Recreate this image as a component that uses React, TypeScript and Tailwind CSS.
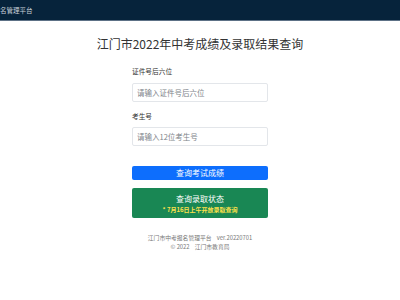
import React from 'react';

const font = { fontFamily: '"Noto Sans CJK SC", "Noto Sans", sans-serif' };

export default function App() {
    return (
        <div className="w-[400px] h-[300px] bg-white overflow-hidden" style={font}>
            {/* top bar, brand text is clipped at the left edge */}
            <div className="h-[21px] bg-[#06233b] border-b-[1.5px] border-[#5d7186] overflow-hidden flex items-center">
                <span className="ml-[-39px] text-[6.5px] leading-none text-[#c9d1d9] whitespace-nowrap">
                    江门市中考报名管理平台
                </span>
            </div>

            <h1 className="mt-[15px] text-center text-[12px] leading-[16px] text-[#333]">
                江门市2022年中考成绩及录取结果查询
            </h1>

            <div className="w-[136px] mx-auto mt-[15px] flex flex-col">
                <label className="text-[6.7px] leading-[8px] text-[#333]">证件号后六位</label>
                <input
                    className="mt-[8px] h-[19px] border border-[#e3e6ea] rounded-[2px] px-[4px] text-[7.5px] placeholder:text-[#7d8389] outline-none"
                    placeholder="请输入证件号后六位"
                />
                <label className="mt-[10px] text-[6.7px] leading-[8px] text-[#333]">考生号</label>
                <input
                    className="mt-[7px] h-[19px] border border-[#e3e6ea] rounded-[2px] px-[4px] text-[7.5px] placeholder:text-[#7d8389] outline-none"
                    placeholder="请输入12位考生号"
                />

                <button className="mt-[20px] h-[14px] rounded-[2px] bg-[#0d6efd] text-white text-[8px] leading-none">
                    查询考试成绩
                </button>
                <button className="mt-[8px] h-[30px] rounded-[2px] bg-[#198754] text-white flex flex-col items-center justify-center">
                    <span className="text-[8px] leading-[10px]">查询录取状态</span>
                    <span className="mt-[2px] text-[6px] leading-[7px] font-bold text-[#ffe14a]">* 7月16日上午开放录取查询</span>
                </button>
            </div>

            <div className="mt-[15px] text-center text-[5.8px] leading-[9px] text-[#777]">
                <p className="whitespace-pre">江门市中考报名管理平台    ver.20220701</p>
                <p className="whitespace-pre">© 2022    江门市教育局</p>
            </div>
        </div>
    );
}
